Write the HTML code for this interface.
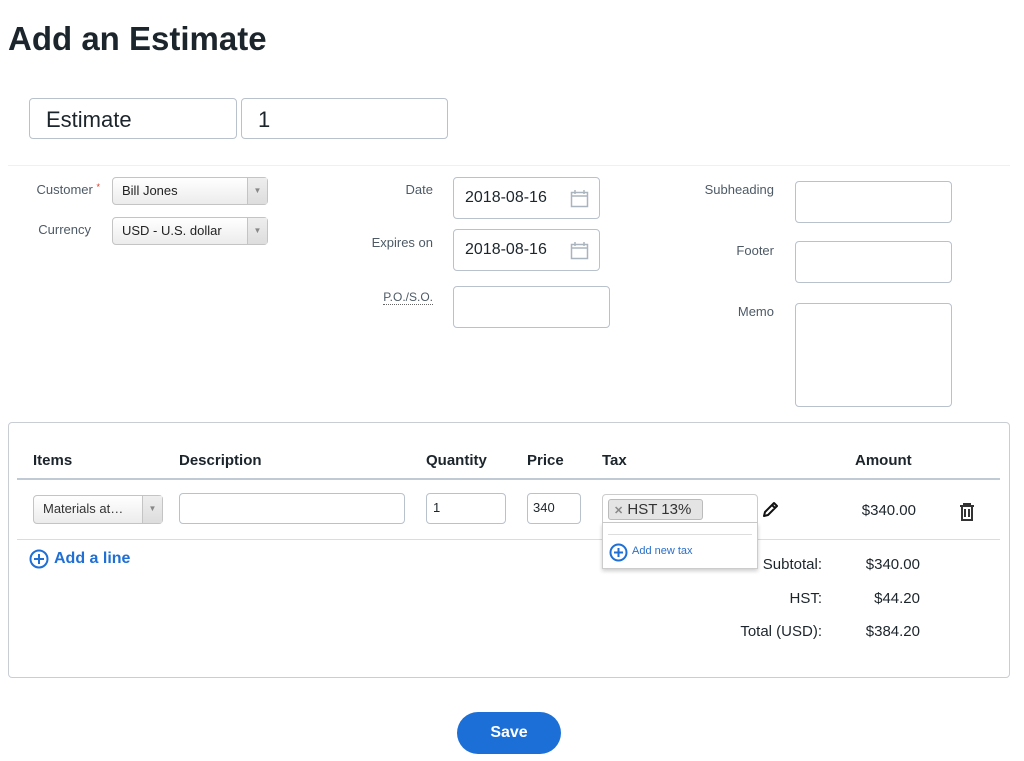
<!DOCTYPE html><html><head><style>
*{box-sizing:border-box;margin:0;padding:0}
body{width:1024px;height:761px;background:#fff;font-family:"Liberation Sans",sans-serif;color:#1c252c;position:relative;overflow:hidden}
.a{position:absolute}
.inp{position:absolute;border:1px solid #b9c2cc;border-radius:4px;background:#fff}
.lbl{position:absolute;font-size:13px;color:#4d5a66;text-align:right}
.sel{position:absolute;border:1px solid #c4c4c4;border-radius:4px;background:linear-gradient(#fff,#ececec);font-size:13px;color:#222;padding-left:9px;line-height:25px}
.sel .ar{position:absolute;right:0;top:0;bottom:0;width:20px;border-left:1px solid #c4c4c4;background:linear-gradient(#eee,#ddd);font-size:8px;color:#888;text-align:center}
.th{position:absolute;top:452px;font-size:15px;font-weight:bold}
.r{position:absolute;font-size:15px;text-align:right;color:#1c252c}
</style></head><body>
<div class="a" style="left:8px;top:20px;font-size:33px;font-weight:bold">Add an Estimate</div>
<div class="inp" style="left:29px;top:98px;width:208px;height:41px;font-size:22px;padding:8px 16px">Estimate</div>
<div class="inp" style="left:241px;top:98px;width:207px;height:41px;font-size:22px;padding:8px 16px">1</div>
<div class="a" style="left:8px;top:165px;width:1002px;height:1px;background:#eef0f2"></div>

<div class="lbl" style="left:20px;top:182px;width:80px">Customer <span style="color:#d32;font-size:9px;vertical-align:top">*</span></div>
<div class="sel" style="left:112px;top:177px;width:156px;height:28px">Bill Jones<div class="ar">▼</div></div>
<div class="lbl" style="left:20px;top:222px;width:71px">Currency</div>
<div class="sel" style="left:112px;top:217px;width:156px;height:28px">USD - U.S. dollar<div class="ar">▼</div></div>

<div class="lbl" style="left:340px;top:182px;width:93px">Date</div>
<div class="inp" style="left:453px;top:177px;width:147px;height:42px;font-size:16px;padding:11px 11px">2018-08-16</div>
<div class="lbl" style="left:340px;top:235px;width:93px">Expires on</div>
<div class="inp" style="left:453px;top:229px;width:147px;height:42px;font-size:16px;padding:11px 11px">2018-08-16</div>
<svg class="a" style="left:570px;top:189px" width="20" height="20"><rect x="1.5" y="3.5" width="16" height="14" fill="none" stroke="#aab4bf" stroke-width="1.5"/><line x1="1.5" y1="7" x2="17.5" y2="7" stroke="#aab4bf" stroke-width="1.5"/><line x1="5" y1="1" x2="5" y2="5" stroke="#aab4bf" stroke-width="1.5"/><line x1="14" y1="1" x2="14" y2="5" stroke="#aab4bf" stroke-width="1.5"/></svg>
<svg class="a" style="left:570px;top:241px" width="20" height="20"><rect x="1.5" y="3.5" width="16" height="14" fill="none" stroke="#aab4bf" stroke-width="1.5"/><line x1="1.5" y1="7" x2="17.5" y2="7" stroke="#aab4bf" stroke-width="1.5"/><line x1="5" y1="1" x2="5" y2="5" stroke="#aab4bf" stroke-width="1.5"/><line x1="14" y1="1" x2="14" y2="5" stroke="#aab4bf" stroke-width="1.5"/></svg>
<div class="lbl" style="left:340px;top:290px;width:93px;font-size:12px"><span style="border-bottom:1px dotted #666">P.O./S.O.</span></div>
<div class="inp" style="left:453px;top:286px;width:157px;height:42px"></div>

<div class="lbl" style="left:660px;top:182px;width:114px">Subheading</div>
<div class="inp" style="left:795px;top:181px;width:157px;height:42px"></div>
<div class="lbl" style="left:660px;top:243px;width:114px">Footer</div>
<div class="inp" style="left:795px;top:241px;width:157px;height:42px"></div>
<div class="lbl" style="left:660px;top:304px;width:114px">Memo</div>
<div class="inp" style="left:795px;top:303px;width:157px;height:104px"></div>

<div class="a" style="left:8px;top:422px;width:1002px;height:256px;border:1px solid #c8ced4;border-radius:4px"></div>
<div class="th" style="left:33px">Items</div>
<div class="th" style="left:179px">Description</div>
<div class="th" style="left:426px">Quantity</div>
<div class="th" style="left:527px">Price</div>
<div class="th" style="left:602px">Tax</div>
<div class="th" style="left:855px">Amount</div>
<div class="a" style="left:17px;top:478px;width:983px;height:2px;background:#bfcad5"></div>

<div class="sel" style="left:33px;top:495px;width:130px;height:29px;line-height:26px;color:#333">Materials at…<div class="ar">▼</div></div>
<div class="inp" style="left:179px;top:493px;width:226px;height:31px"></div>
<div class="inp" style="left:426px;top:493px;width:80px;height:31px;font-size:13px;padding:6px 6px">1</div>
<div class="inp" style="left:527px;top:493px;width:54px;height:31px;font-size:13px;padding:6px 5px">340</div>
<div class="inp" style="left:602px;top:494px;width:156px;height:29px;border-radius:4px 4px 0 0;border-color:#ccc"></div>
<div class="a" style="left:608px;top:499px;width:95px;height:21px;background:#e4e4e4;border:1px solid #bbb;border-radius:3px;font-size:15px;padding:0 5px;line-height:19px;color:#333"><span style="color:#888;font-size:11px;font-weight:bold">✕</span> HST 13%</div>
<svg class="a" style="left:761px;top:499px" width="20" height="20"><path d="M3 17 L4 13 L13 4 L16 7 L7 16 Z M11 6 L14 9" fill="none" stroke="#111" stroke-width="2" stroke-linejoin="round"/></svg>
<div class="r" style="left:830px;top:502px;width:86px">$340.00</div>
<svg class="a" style="left:958px;top:502px" width="18" height="20"><path d="M2 4 H16 M6 4 V2 H12 V4 M4 4 V18 H14 V4 M7 7 V15 M11 7 V15" fill="none" stroke="#333" stroke-width="2"/></svg>
<div class="a" style="left:17px;top:539px;width:983px;height:1px;background:#d6dde3"></div>

<div class="r" style="left:700px;top:556px;width:122px">Subtotal:</div>
<div class="r" style="left:830px;top:556px;width:90px">$340.00</div>
<div class="r" style="left:700px;top:590px;width:122px">HST:</div>
<div class="r" style="left:830px;top:590px;width:90px">$44.20</div>
<div class="r" style="left:700px;top:623px;width:122px">Total (USD):</div>
<div class="r" style="left:830px;top:623px;width:90px">$384.20</div>

<div class="a" style="left:602px;top:523px;width:156px;height:46px;background:#fff;border:1px solid #ccc;border-top:none;box-shadow:0 2px 4px rgba(0,0,0,.2)"></div>
<div class="a" style="left:608px;top:534px;width:144px;height:1px;background:#ddd"></div>
<svg class="a" style="left:609px;top:543px" width="19" height="19"><circle cx="9.5" cy="9.5" r="8" fill="none" stroke="#1f6fd4" stroke-width="2"/><path d="M9.5 5 V14 M5 9.5 H14" stroke="#1f6fd4" stroke-width="2"/></svg>
<div class="a" style="left:632px;top:545px;font-size:11px;color:#2a6fc9">Add new tax</div>

<svg class="a" style="left:29px;top:549px" width="20" height="20"><circle cx="10" cy="10" r="8.5" fill="none" stroke="#1f6fd4" stroke-width="2"/><path d="M10 5 V15 M5 10 H15" stroke="#1f6fd4" stroke-width="2"/></svg>
<div class="a" style="left:54px;top:550px;font-size:16px;font-weight:bold;color:#1f6fd4">Add a line</div>

<div class="a" style="left:457px;top:712px;width:104px;height:42px;border-radius:21px;background:#1c6fd6;color:#fff;font-weight:bold;font-size:16px;text-align:center;line-height:42px">Save</div>
</body></html>
